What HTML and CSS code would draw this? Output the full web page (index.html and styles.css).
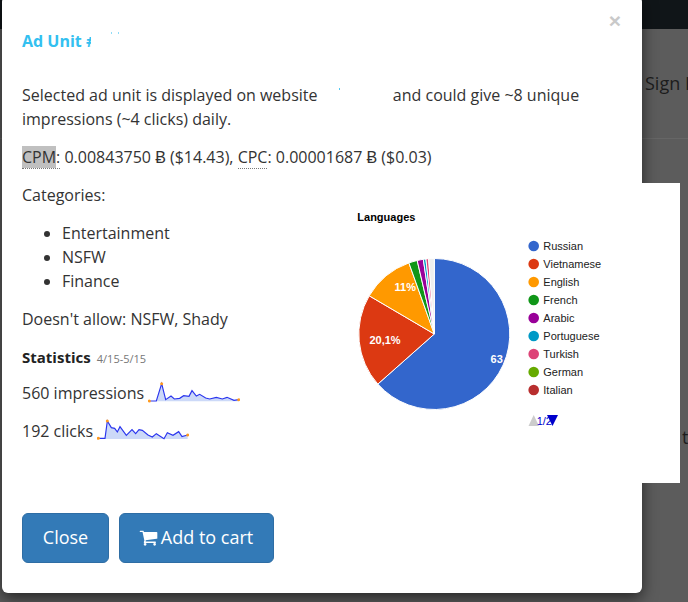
FILE: index.html
```html
<!DOCTYPE html>
<html lang="en">
<head>
<meta charset="utf-8">
<title>Ad Unit</title>
<link rel="stylesheet" href="styles.css">
</head>
<body>
<div class="page">
  <div class="topbar"></div>
  <div class="nav"><span class="signin">Sign In</span></div>
  <div class="stray">t</div>
</div>
<div class="modal">
  <button class="close" type="button">×</button>
  <h4 class="title">Ad Unit <span class="clip">#</span><span class="speck speck-a"></span><span class="speck speck-b"></span></h4>
  <p>Selected ad unit is displayed on website <span class="redacted"><span class="speck speck-c"></span></span> and could give ~8 unique impressions (~4 clicks) daily.</p>
  <p><abbr class="hint selected-wrap"><span class="selected">CPM</span>:</abbr> 0.00843750 Ƀ ($14.43), <abbr class="hint">CPC</abbr>: 0.00001687 Ƀ ($0.03)</p>
  <p>Categories:</p>
  <ul class="cats">
    <li>Entertainment</li>
    <li>NSFW</li>
    <li>Finance</li>
  </ul>
  <p>Doesn't allow: NSFW, Shady</p>
  <p class="stats-head"><strong class="stats-title">Statistics</strong> <small class="range">4/15-5/15</small></p>
  <p class="stat">560 impressions
    <svg class="spark spark-imp" viewBox="445 120 276 66" width="92" height="22">
      <polygon class="spark-fill" points="449,181 470,181 486,128 498,176 514,165 524,174 540,172 552,164 568,166 577,149 590,165 600,160 618,171 630,174 650,169 668,174 682,169 703,178 717,176 717,181"/>
      <polyline class="spark-line" points="449,180 470,180 486,128 498,176 514,165 524,174 540,172 552,164 568,166 577,149 590,165 600,160 618,171 630,174 650,169 668,174 682,169 703,178 717,176"/>
      <circle class="spark-dot" cx="449" cy="180" r="4.5"/><circle class="spark-dot" cx="486" cy="128" r="4.5"/><circle class="spark-dot" cx="717" cy="176" r="4.5"/>
    </svg>
  </p>
  <p class="stat">192 clicks
    <svg class="spark spark-clk" viewBox="292 236 276 66" width="92" height="22">
      <polygon class="spark-fill" points="296,296 316,296 323,242 335,262 345,264 353,275 361,259 380,285 397,268 408,280 418,268 428,270 445,284 458,290 470,280 493,295 503,277 520,285 537,274 547,289 564,284 564,296"/>
      <polyline class="spark-line" points="296,294 316,294 323,242 335,262 345,264 353,275 361,259 380,285 397,268 408,280 418,268 428,270 445,284 458,290 470,280 493,295 503,277 520,285 537,274 547,289 564,284"/>
      <circle class="spark-dot" cx="296" cy="294" r="4.5"/><circle class="spark-dot" cx="323" cy="242" r="4.5"/><circle class="spark-dot" cx="564" cy="284" r="4.5"/>
    </svg>
  </p>
  <div class="actions">
    <button class="btn btn-close" type="button">Close</button>
    <button class="btn btn-cart" type="button"><svg class="cart" viewBox="0 0 1792 1792" width="19" height="19"><path d="M704 1536q0 52-38 90t-90 38-90-38-38-90 38-90 90-38 90 38 38 90zm896 0q0 52-38 90t-90 38-90-38-38-90 38-90 90-38 90 38 38 90zm128-1088v512q0 24-16.5 42.5t-40.5 20.5l-1044 122q13 60 13 70 0 16-24 64h920q26 0 45 19t19 45-19 45-45 19h-1024q-26 0-45-19t-19-45q0-11 8-31.5t16-36 21.5-40 15.5-29.5l-177-823h-204q-26 0-45-19t-19-45 19-45 45-19h256q16 0 28.5 6.5t19.5 15.5 13 24.5 8 26 5.5 29.5 4.5 26h1201q26 0 45 19t19 45z"/></svg> Add to cart</button>
  </div>
  <svg class="chart" viewBox="0 0 380 300" width="380" height="300">
    <text class="chart-title" x="57.3" y="38">Languages</text>
    <g class="slices">
      <path fill="#3366cc" d="M134.3 151V75.5A75.5 75.5 0 1 1 77.8 201.1Z"/>
      <path fill="#dc3912" d="M134.3 151L77.8 201.1A75.5 75.5 0 0 1 69.2 112.8Z"/>
      <path fill="#ff9900" d="M134.3 151L69.2 112.8A75.5 75.5 0 0 1 108.9 79.9Z"/>
      <path fill="#109618" d="M134.3 151L108.9 79.9A75.5 75.5 0 0 1 117.2 77.5Z"/>
      <path fill="#990099" d="M134.3 151L117.2 77.5A75.5 75.5 0 0 1 123.3 76.3Z"/>
      <path fill="#0099c6" d="M134.3 151L123.3 76.3A75.5 75.5 0 0 1 125.9 76Z"/>
      <path fill="#dd4477" d="M134.3 151L125.9 76A75.5 75.5 0 0 1 128.6 75.7Z"/>
      <path fill="#eeeeee" d="M134.3 151L128.6 75.7A75.5 75.5 0 0 1 134.3 75.5Z"/>
    </g>
    <text class="pie-label" x="105.3" y="108">11%</text>
    <text class="pie-label" x="85" y="161">20,1%</text>
    <text class="pie-label" x="196.7" y="180">63</text>
    <g class="legend">
      <circle cx="233.7" cy="63" r="5.3" fill="#3366cc"/><text x="243.3" y="67">Russian</text>
      <circle cx="233.7" cy="81" r="5.3" fill="#dc3912"/><text x="243.3" y="85">Vietnamese</text>
      <circle cx="233.7" cy="99" r="5.3" fill="#ff9900"/><text x="243.3" y="103">English</text>
      <circle cx="233.7" cy="117" r="5.3" fill="#109618"/><text x="243.3" y="121">French</text>
      <circle cx="233.7" cy="135" r="5.3" fill="#990099"/><text x="243.3" y="139">Arabic</text>
      <circle cx="233.7" cy="153" r="5.3" fill="#0099c6"/><text x="243.3" y="157">Portuguese</text>
      <circle cx="233.7" cy="171" r="5.3" fill="#dd4477"/><text x="243.3" y="175">Turkish</text>
      <circle cx="233.7" cy="189" r="5.3" fill="#66aa00"/><text x="243.3" y="193">German</text>
      <circle cx="233.7" cy="207" r="5.3" fill="#b82e2e"/><text x="243.3" y="211">Italian</text>
    </g>
    <polygon fill="#cccccc" points="228.5,243 239,243 233.7,232"/>
    <text class="pager" x="236.7" y="242">1/2</text>
    <polygon fill="#0000cc" points="247,232 258,232 252.5,243"/>
  </svg>
</div>
</body>
</html>
```
FILE: styles.css
```css
* { box-sizing: border-box; }
html, body { margin: 0; height: 100%; }
body {
  width: 688px;
  height: 602px;
  overflow: hidden;
  position: relative;
  background: #5c5c5c;
  font-family: "Open Sans", "Liberation Sans", sans-serif;
  font-size: 16px;
  line-height: 24px;
  color: #333;
}
.page { height: 100%; }
.topbar { height: 29px; background: #101518; }
.nav {
  height: 110px;
  border-bottom: 1px solid #666;
  padding: 42px 0 0 645px;
  white-space: nowrap;
  overflow: hidden;
}
.signin { font-size: 18px; color: #1c1c1c; }
.stray {
  position: absolute;
  left: 682px;
  top: 425px;
  font-size: 18px;
  color: #1c1c1c;
}
.modal {
  position: absolute;
  left: 2px;
  top: -4px;
  width: 640px;
  height: 597px;
  padding: 32px 20px 0;
  background: #fff;
  border-radius: 6px;
  box-shadow: 0 5px 15px rgba(0, 0, 0, .6);
}
.close {
  position: absolute;
  right: 21px;
  top: 12px;
  padding: 0;
  border: 0;
  background: none;
  font-family: "Liberation Sans", sans-serif;
  font-size: 21px;
  font-weight: 700;
  line-height: 26px;
  color: #c9c9c9;
}
.title {
  position: relative;
  margin: 0 0 29px;
  height: 26px;
  font-size: 16px;
  line-height: 26px;
  font-weight: 700;
  color: #33c0f0;
}
.clip {
  display: inline-block;
  width: 5px;
  height: 11px;
  overflow: hidden;
  vertical-align: -1px;
  line-height: 8px;
}
.speck { position: absolute; width: 1px; height: 2px; background: #8fdcf7; }
.speck-a { left: 89px; top: 4px; }
.speck-b { left: 96px; top: 4px; }
.redacted { display: inline-block; position: relative; width: 67px; height: 1px; }
.speck-c { left: 17px; top: -12px; background: #4fc8f2; }
p { margin: 0 0 14px; }
abbr.hint { border-bottom: 1px dotted #777; }
.selected { background: #c0c0c0; }
.cats { margin: 0 0 14px; padding: 0 0 0 40px; }
.stats-head { margin-bottom: 10px; }
.stats-title { font-size: 15px; font-weight: 700; color: #222; }
.range { font-size: 11px; color: #777; margin-left: 2px; }
.stat { white-space: nowrap; height: 24px; }
.spark { vertical-align: -4px; margin-left: 0; }
.spark-fill { fill: #ccd9f8; }
.spark-line { fill: none; stroke: #2a35ee; stroke-width: 3.5; }
.spark-dot { fill: #ff9a1e; }
.actions { position: absolute; left: 20px; top: 517px; display: flex; gap: 10px; }
.btn {
  display: flex;
  align-items: center;
  justify-content: center;
  height: 50px;
  padding: 0 20px 2px;
  font-family: "Open Sans", sans-serif;
  font-size: 18px;
  color: #fff;
  background: #337ab7;
  border: 1px solid #2e6da4;
  border-radius: 6px;
}
.btn-close { width: 87px; }
.btn-cart { width: 155px; gap: 3px; padding: 0 19px 2px 18px; white-space: nowrap; }
.cart { fill: #fff; flex: none; }
.chart {
  position: absolute;
  left: 298px;
  top: 187px;
  background: #fff;
  font-family: "Liberation Sans", Arial, sans-serif;
}
.chart-title { font-size: 11px; font-weight: 700; fill: #000; }
.slices path { stroke: #fff; stroke-width: 1; }
.pie-label { font-size: 11px; font-weight: 700; fill: #fff; text-anchor: middle; }
.legend text { font-size: 11px; fill: #222; }
.pager { font-size: 11px; fill: #0000cc; }
```
